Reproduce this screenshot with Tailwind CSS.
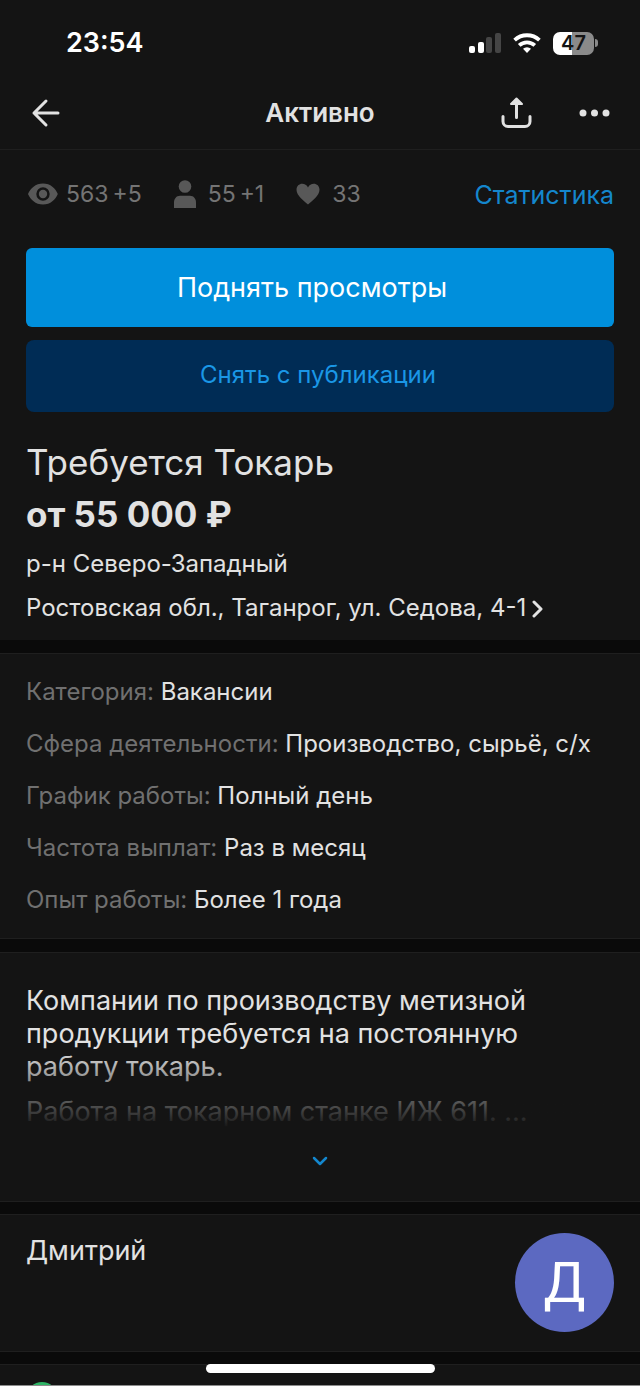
<!DOCTYPE html>
<html lang="ru">
<head>
    <meta charset="UTF-8">
    <meta name="viewport" content="width=device-width, initial-scale=1.0">
    <title>Требуется Токарь</title>
    <script src="https://cdn.jsdelivr.net/npm/@tailwindcss/browser@4"></script>
</head>
<body class="bg-[#0a0a0a] text-[#e2e2e2] font-['Inter','Roboto',sans-serif]">
    <div class="relative flex flex-col h-screen overflow-hidden">
        <!-- Status bar -->
        <div class="flex items-center justify-between shrink-0 h-19 pt-[10px] pl-[66px] pr-[42px] bg-[#141414] text-white">
            <span class="text-[27px] font-semibold">23:54</span>
            <div class="flex items-center gap-3">
                <svg class="w-8 h-5" viewBox="0 0 32 20" fill="#fff">
                    <rect x="0" y="13" width="6" height="7" rx="2"/>
                    <rect x="9" y="9" width="6" height="11" rx="2"/>
                    <rect x="17" y="4" width="6" height="16" rx="2" fill="#454545"/>
                    <rect x="26" y="0" width="6" height="20" rx="2" fill="#454545"/>
                </svg>
                <svg class="w-7 h-5" viewBox="0 0 28 20" fill="none" stroke="#fff" stroke-width="3.8">
                    <path d="M1.600 7.200a18 18 0 0 1 24.800 0"/>
                    <path d="M6.200 12.400a11.500 11.500 0 0 1 15.600 0"/>
                    <path d="M14 20l-4-4.200a5.800 5.800 0 0 1 8 0z" fill="#fff" stroke="none"/>
                </svg>
                <div class="flex items-center gap-px">
                    <span class="flex items-center justify-center w-[41px] h-[23px] rounded-[7px] bg-linear-to-r from-white from-47% to-[#8a8a8a] to-47% text-[#141414] text-[20px] font-semibold">47</span>
                    <span class="w-[3px] h-2 rounded-r-full bg-[#8a8a8a]"></span>
                </div>
            </div>
        </div>

        <!-- Header -->
        <header class="relative flex items-center justify-between shrink-0 h-[74px] px-7 bg-[#141414] border-b border-[#1f1f1f]">
            <button type="button" aria-label="Назад">
                <svg class="w-9 h-8" viewBox="0 0 36 32" fill="none" stroke="currentColor" stroke-width="3" stroke-linecap="round" stroke-linejoin="round">
                    <path d="M30 16H6M18 4L6 16l12 12"/>
                </svg>
            </button>
            <h1 class="absolute inset-x-32 text-center text-[26px] font-semibold">Активно</h1>
            <div class="flex items-center gap-11">
                <button type="button" aria-label="Поделиться">
                    <svg class="w-8 h-8" viewBox="0 0 32 32" fill="none" stroke="currentColor" stroke-width="3" stroke-linecap="round" stroke-linejoin="round">
                        <path d="M3 19.500v5a5 5 0 0 0 5 5h17a5 5 0 0 0 5-5v-5M16.500 20.500V4"/>
                        <path d="M16.500 1.500l5.500 5.500H11z" fill="currentColor" stroke-width="2"/>
                    </svg>
                </button>
                <button type="button" aria-label="Ещё">
                    <svg class="w-9 h-8" viewBox="0 0 36 32" fill="currentColor">
                        <circle cx="7" cy="16" r="3.500"/><circle cx="18.500" cy="16" r="3.500"/><circle cx="30" cy="16" r="3.500"/>
                    </svg>
                </button>
            </div>
        </header>

        <!-- Summary -->
        <section class="shrink-0 px-[26px] pb-[14px] bg-[#141414]">
            <div class="flex items-center h-[88px] mb-[10px] text-[24px] text-[#747474]">
                <svg class="w-8 h-6 mr-2" viewBox="0 0 32 24" fill="#585858">
                    <path fill-rule="evenodd" d="M17 1.500c7.500 0 12.600 5 14.800 10.500C29.600 17.500 24.500 22.500 17 22.500S4.400 17.500 2 12C4.400 6.500 9.500 1.500 17 1.500zM17 5.300a6.700 6.700 0 1 0 0 13.400a6.700 6.700 0 1 0 0-13.400z"/>
                    <circle cx="17" cy="12" r="4.200"/>
                </svg>
                <div class="flex gap-1 text-[23px]"><span>563</span><span>+5</span></div>
                <svg class="w-[22px] h-7 ml-8 mr-3" viewBox="0 0 22 28" fill="#585858">
                    <circle cx="11" cy="6.500" r="6.300"/>
                    <path d="M0 28v-5.500c0-4 2.500-6.800 6-6.800h10c3.500 0 6 2.800 6 6.800V28z"/>
                </svg>
                <div class="flex gap-1 text-[23px]"><span>55</span><span>+1</span></div>
                <svg class="w-6 h-6 ml-8 mr-3" viewBox="0 0 24 24" fill="#585858">
                    <path d="M12 22.500C8.500 19.500 0.500 14 0.500 7.800C0.500 4 3.200 1.800 6.200 1.800c2.500 0 4.600 1.300 5.800 3.600c1.200-2.300 3.300-3.600 5.800-3.600c3 0 5.700 2.200 5.700 6C23.500 14 15.500 19.500 12 22.500z"/>
                </svg>
                <span class="text-[23px]">33</span>
                <a href="#" class="ml-auto pt-[3px] text-[25px] text-[#1487cd]">Статистика</a>
            </div>
            <button type="button" class="block w-full h-[79px] pt-[2px] pr-4 rounded-md bg-[#008fdc] text-[27px] text-white">Поднять просмотры</button>
            <button type="button" class="block w-full h-[72px] mt-[13px] pb-[2px] pr-1 rounded-lg bg-[#002c55] text-[24px] text-[#1a97e6]">Снять с публикации</button>
            <h2 class="mt-[26px] text-[35px] leading-[48px]">Требуется Токарь</h2>
            <p class="mt-1 text-[35px] leading-[48px] font-bold">от 55 000 ₽</p>
            <p class="mt-2 text-[24px] leading-[36px]">р-н Северо-Западный</p>
            <a href="#" class="flex items-center mt-2 text-[24px] leading-[36px] whitespace-nowrap">
                Ростовская обл., Таганрог, ул. Седова, 4-1
                <svg class="w-3 h-5 ml-[6px]" viewBox="0 0 12 20" fill="none" stroke="currentColor" stroke-width="3" stroke-linecap="round" stroke-linejoin="round">
                    <path d="M2 4l7 7-7 7"/>
                </svg>
            </a>
        </section>

        <!-- Parameters -->
        <section class="shrink-0 mt-[13px] px-[26px] py-3 bg-[#141414] border-y border-[#1f1f1f] text-[24px] leading-[52px] whitespace-nowrap">
            <p><span class="text-[#707070]">Категория:</span> Вакансии</p>
            <p><span class="text-[#707070]">Сфера деятельности:</span> Производство, сырьё, с/х</p>
            <p><span class="text-[#707070]">График работы:</span> Полный день</p>
            <p><span class="text-[#707070]">Частота выплат:</span> Раз в месяц</p>
            <p><span class="text-[#707070]">Опыт работы:</span> Более 1 года</p>
        </section>

        <!-- Description -->
        <section class="shrink-0 mt-[13px] px-[26px] pt-[31px] pb-[25px] bg-[#141414] border-y border-[#1f1f1f]">
            <div class="relative text-[27px] leading-[33px] whitespace-nowrap">
                <p>Компании по производству метизной<br>продукции требуется на постоянную<br>работу токарь.</p>
                <p class="mt-3">Работа на токарном станке ИЖ 611. ...</p>
                <div class="absolute inset-x-0 bottom-0 h-20 bg-linear-to-b from-transparent to-[#141414]"></div>
            </div>
            <button type="button" aria-label="Показать полностью" class="block mx-auto mt-4">
                <svg class="w-4 h-8" viewBox="0 0 16 32" fill="none" stroke="#1487cd" stroke-width="2.500" stroke-linecap="round" stroke-linejoin="round">
                    <path d="M2 14l6 6 6-6"/>
                </svg>
            </button>
        </section>

        <!-- Seller -->
        <section class="flex items-start justify-between shrink-0 mt-[12px] px-[26px] pt-[18px] pb-[19px] bg-[#141414] border-y border-[#1f1f1f]">
            <p class="text-[27px] leading-[36px]">Дмитрий</p>
            <span class="flex items-center justify-center size-[99px] rounded-full bg-[#5c69c1] text-[56px] text-white font-['Roboto',sans-serif]">Д</span>
        </section>

        <section class="flex-1 mt-[12px] px-[26px] pt-[17px] bg-[#141414] border-t border-[#1f1f1f] overflow-hidden">
            <div class="size-8 rounded-full bg-[#2fb566]"></div>
        </section>

        <div class="absolute bottom-0 inset-x-0 border-b border-[#8c8c8c]"></div>
        <div class="absolute bottom-[13px] inset-x-0 w-[229px] h-[9px] mx-auto rounded-full bg-white"></div>
    </div>
</body>
</html>
